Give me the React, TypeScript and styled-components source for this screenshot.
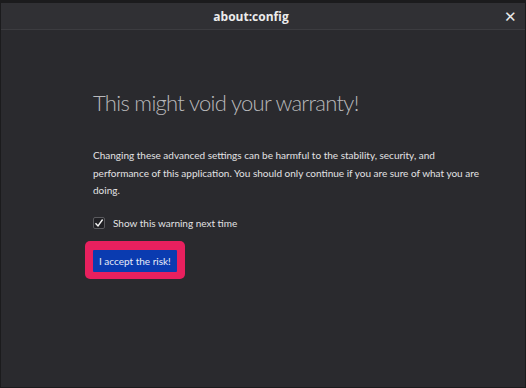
import styled, { createGlobalStyle } from "styled-components";

const Global = createGlobalStyle`
  html, body {
    margin: 0;
    padding: 0;
    background: #1b1b1d;
  }
  body {
    font-family: Lato, "Open Sans", sans-serif;
  }
`;

const Window = styled.div`
  width: 526px;
  height: 388px;
  box-sizing: border-box;
  padding: 3px 1px 1px 1px;
  background: #1b1b1d;
  display: flex;
  flex-direction: column;
`;

const TitleBar = styled.div`
  height: 26px;
  flex: none;
  display: grid;
  grid-template-columns: 40px 1fr 40px;
  align-items: center;
  background: #303034;
  border-bottom: 1px solid #3c3c40;
`;

const Title = styled.div`
  text-align: center;
  color: #ececec;
  font-family: "Open Sans", sans-serif;
  font-size: 12px;
  font-weight: 700;
  margin-right: 24px;
`;

const Close = styled.div`
  color: #e8e8e8;
  font-size: 15px;
  line-height: 1;
  text-align: center;
  padding-left: 10px;
`;

const Content = styled.main`
  flex: 1;
  background: #2a2a2e;
  padding: 59px 0 0 92px;
`;

const Box = styled.div`
  width: 390px;
`;

const Heading = styled.h1`
  margin: 0 0 30px;
  font-size: 22px;
  font-weight: 300;
  letter-spacing: -0.7px;
  color: #b8b8ba;
`;

const Text = styled.p`
  margin: 0 0 17px;
  font-size: 10px;
  line-height: 17.5px;
  color: #e2e2e4;
  padding-top: 1px;
`;

const CheckRow = styled.label`
  display: flex;
  align-items: center;
  gap: 8px;
  font-size: 10px;
  color: #e2e2e4;
`;

const Check = styled.span`
  width: 12px;
  height: 12px;
  box-sizing: border-box;
  border: 1px solid #5a5a5e;
  border-radius: 2px;
  background: #202024;
  display: flex;
  align-items: center;
  justify-content: center;
`;

const Ring = styled.div`
  display: inline-block;
  margin: 12px 0 0 -8px;
  padding: 9px 8px 7px;
  background: #e8205e;
  border-radius: 5px;
`;

const Button = styled.button`
  display: block;
  border: none;
  background: #0a3bb0;
  color: #e8ecf8;
  font-family: inherit;
  font-size: 10px;
  height: 22px;
  padding: 0 6px;
  border-radius: 1px;
`;

export default function App() {
  return (
    <Window>
      <Global />
      <TitleBar>
        <span />
        <Title>about:config</Title>
        <Close>✕</Close>
      </TitleBar>
      <Content>
        <Box>
          <Heading>This might void your warranty!</Heading>
          <Text>
            Changing these advanced settings can be harmful to the stability,
            security, and performance of this application. You should only
            continue if you are sure of what you are doing.
          </Text>
          <CheckRow>
            <Check>
              <svg width="10" height="10" viewBox="0 0 10 10">
                <path d="M1.5 5.2 L4 8 L8.6 1.5" stroke="#f4f4f4" strokeWidth="1.4" fill="none" />
              </svg>
            </Check>
            Show this warning next time
          </CheckRow>
          <Ring>
            <Button>I accept the risk!</Button>
          </Ring>
        </Box>
      </Content>
    </Window>
  );
}
